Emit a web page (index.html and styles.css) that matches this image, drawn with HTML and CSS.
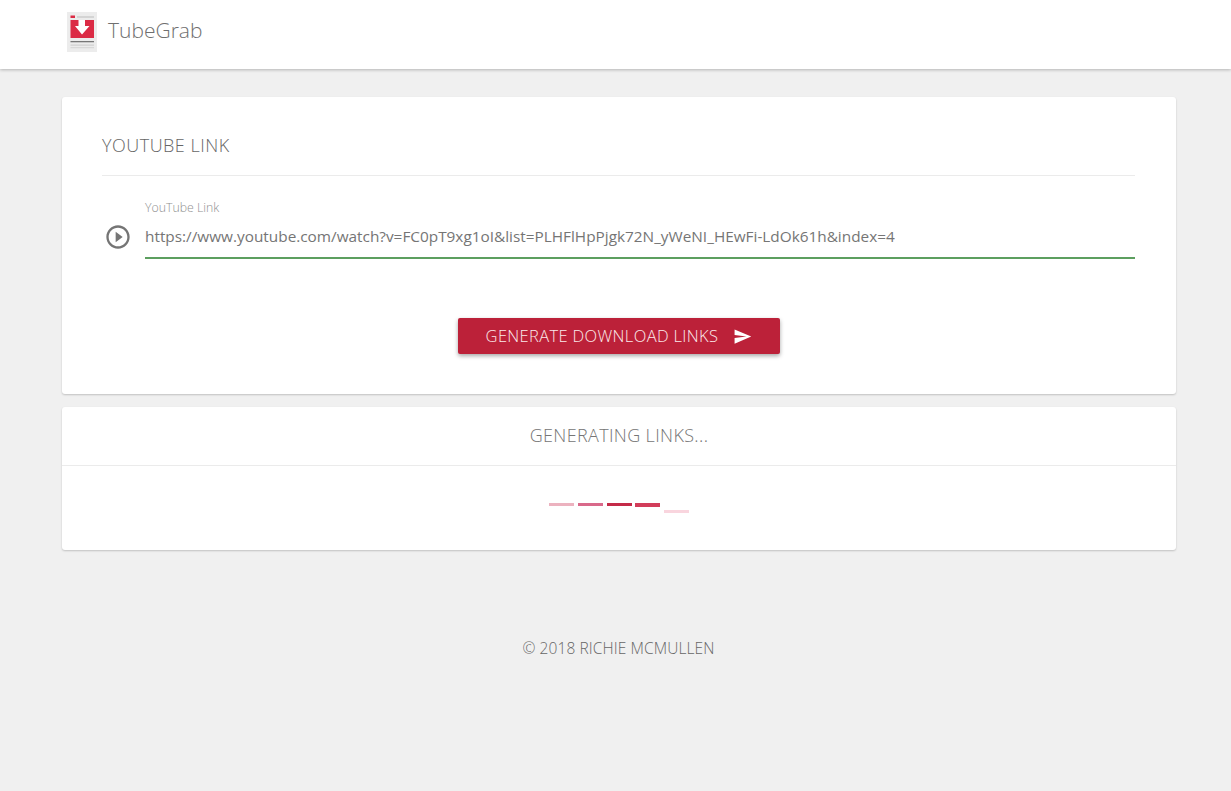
FILE: index.html
```html
<!DOCTYPE html>
<html lang="en">
<head>
<meta charset="utf-8">
<title>TubeGrab</title>
<link rel="stylesheet" href="styles.css">
</head>
<body>
<header class="topbar">
  <svg class="logo" width="30" height="40" viewBox="0 0 30 40">
    <rect width="30" height="40" fill="#ececec"/>
    <rect x="3.500" y="3.500" width="4.500" height="2.500" fill="#db2b45"/>
    <rect x="10" y="4" width="17" height="2" fill="#d4d4d4"/>
    <rect x="3.500" y="8" width="23.500" height="18" fill="#db2b45"/>
    <path d="M11.500 8h6.500v6h4.500L15 22.500l-7-8.500h3.500z" fill="#fff"/>
    <rect x="3.500" y="29" width="23.500" height="1.300" fill="#777"/>
    <rect x="3.500" y="32.500" width="23.500" height="1.200" fill="#cfcfcf"/>
    <rect x="3.500" y="35" width="23.500" height="1.200" fill="#d8d8d8"/>
  </svg>
  <span class="brand">TubeGrab</span>
</header>
<main class="content">
  <section class="card card-form">
    <h2 class="card-title">YOUTUBE LINK</h2>
    <div class="field">
      <svg class="field-icon" width="28" height="28" viewBox="0 0 24 24"><path fill="#757575" d="M10 16.500l6-4.500-6-4.500v9zM12 2C6.480 2 2 6.480 2 12s4.480 10 10 10 10-4.480 10-10S17.520 2 12 2zm0 18c-4.410 0-8-3.590-8-8s3.590-8 8-8 8 3.590 8 8-3.590 8-8 8z"/></svg>
      <div class="field-body">
        <label class="field-label">YouTube Link</label>
        <div class="field-value">https://www.youtube.com/watch?v=FC0pT9xg1oI&amp;list=PLHFlHpPjgk72N_yWeNI_HEwFi-LdOk61h&amp;index=4</div>
      </div>
    </div>
    <div class="actions">
      <button class="btn">GENERATE DOWNLOAD LINKS
        <svg class="btn-icon" width="19" height="19" viewBox="0 0 24 24"><path fill="#fff" d="M2.010 21L23 12 2.010 3 2 10l15 2-15 2z"/></svg>
      </button>
    </div>
  </section>
  <section class="card card-status">
    <h2 class="status-title">GENERATING LINKS...</h2>
    <div class="loader">
      <span class="dash dash-1"></span>
      <span class="dash dash-2"></span>
      <span class="dash dash-3"></span>
      <span class="dash dash-4"></span>
      <span class="dash dash-5"></span>
    </div>
  </section>
</main>
<footer class="footer">© 2018 RICHIE MCMULLEN</footer>
</body>
</html>
```
FILE: styles.css
```css
* { box-sizing: border-box; }
html, body { height: 100%; }
body {
  margin: 0;
  background: #f0f0f0;
  color: #757575;
  font-family: "Open Sans", "Noto Sans", sans-serif;
  overflow: hidden;
}
.topbar {
  height: 69px;
  background: #fff;
  display: flex;
  align-items: center;
  padding: 0 0 5px 67px;
  box-shadow: 0 1px 3px rgba(0,0,0,.25);
}
.logo { flex: none; }
.brand {
  margin-left: 11px;
  font-size: 21px;
  font-weight: 300;
  color: #6f6f6f;
  margin-top: -4px;
}
.content { padding: 28px 55px 0 62px; }
.card {
  background: #fff;
  border-radius: 3px;
  box-shadow: 0 1px 2px rgba(0,0,0,.2);
}
.card-form {
  height: 297px;
  padding: 37px 41px 0 40px;
}
.card-title {
  margin: 0;
  height: 42px;
  font-size: 18px;
  letter-spacing: .5px;
  line-height: 23px;
  font-weight: 300;
  color: #666;
  border-bottom: 1px solid #ebebeb;
}
.field {
  display: flex;
  margin-top: 24px;
}
.field-icon {
  flex: none;
  margin: 23px 13px 0 2px;
}
.field-body { flex: 1; min-width: 0; }
.field-label {
  display: block;
  font-size: 12.300px;
  line-height: 16px;
  font-weight: 300;
  color: #8f8f8f;
}
.field-value {
  margin-top: 7px;
  height: 36px;
  font-size: 15.350px;
  line-height: 26px;
  color: #757575;
  border-bottom: 2px solid #5c9f5f;
}
.actions {
  display: flex;
  justify-content: center;
  margin-top: 59px;
  padding-left: 1px;
}
.btn {
  display: flex;
  align-items: center;
  justify-content: center;
  gap: 15px;
  width: 322px;
  height: 36px;
  padding: 0 0 2px;
  border: 0;
  border-radius: 2px;
  background: #bc2139;
  color: #fbe9eb;
  font-family: inherit;
  font-size: 16.500px;
  letter-spacing: .35px;
  font-weight: 300;
  box-shadow: 0 2px 4px rgba(0,0,0,.35);
}
.btn-icon { margin-top: 2px; }
.card-status {
  height: 143px;
  margin-top: 13px;
}
.status-title {
  margin: 0;
  height: 59px;
  font-size: 18px;
  letter-spacing: .35px;
  line-height: 57px;
  font-weight: 300;
  text-align: center;
  color: #757575;
  border-bottom: 1px solid #ebebeb;
}
.loader {
  display: flex;
  justify-content: center;
  gap: 4px;
  padding-top: 37px;
}
.dash {
  width: 25px;
  height: 3px;
}
.dash-1 { background: #ecb2bf; }
.dash-2 { background: #d9698a; }
.dash-3 { background: #c42a48; }
.dash-4 { background: #d23d5a; height: 4px; margin-left: -1px; }
.dash-5 { background: #f9d5de; margin-top: 7px; }
.footer {
  margin-top: 88px;
  text-align: center;
  font-size: 15.500px;
  letter-spacing: .1px;
  line-height: 20px;
  font-weight: 300;
  color: #666;
  padding-left: 6px;
}
```
